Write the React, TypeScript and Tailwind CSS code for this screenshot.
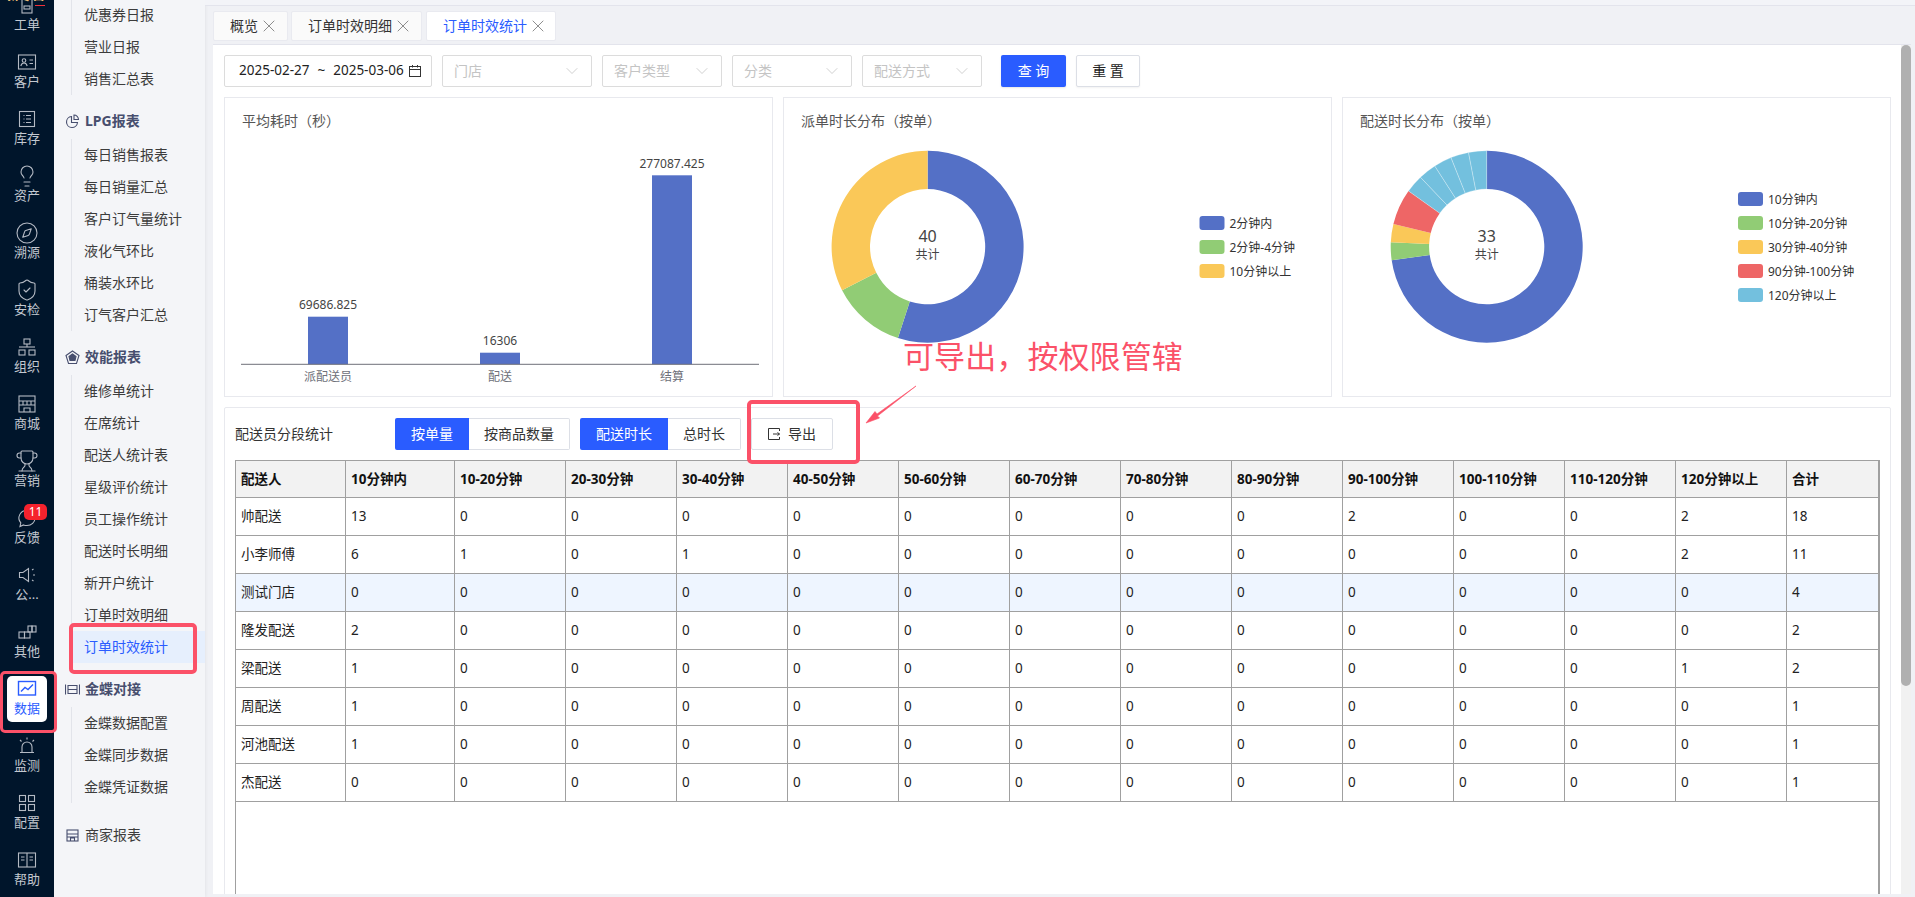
import React from "react";
import { Lightbulb, Compass, ShieldCheck, Trophy, X, ChevronDown } from "lucide-react";

const FONT = { fontFamily: '"Noto Sans","Noto Sans CJK SC",sans-serif' };
const BLUE = "#2a5cff";
const C = { b: "#5470c6", g: "#91cc75", y: "#fac858", r: "#ee6666", c: "#73c0de" };

function Ico({ children, color = "#b4bac4" }: { children: React.ReactNode; color?: string }) {
  return (
    <svg width="24" height="24" viewBox="0 0 24 24" fill="none" stroke={color} strokeWidth="1.1">
      {children}
    </svg>
  );
}

const nav: { label: string; icon: React.ReactNode; active?: boolean; badge?: string }[] = [
  { label: "工单", icon: <Ico><rect x="7" y="6" width="10" height="14" /><rect x="9" y="13" width="6" height="3" /></Ico> },
  { label: "客户", icon: <Ico><rect x="3.5" y="5" width="17" height="14" /><circle cx="9" cy="10.5" r="1.8" /><path d="M5.8 16c.5-2 1.8-3 3.2-3s2.7 1 3.2 3M14.5 10h3.5M14.5 13.5h3.5" /></Ico> },
  { label: "库存", icon: <Ico><rect x="4.5" y="4.5" width="15" height="15" /><path d="M8.5 8.5h1M8.5 12h1M8.5 15.5h1M11 8.5h5M11 12h5M11 15.5h5" /></Ico> },
  { label: "资产", icon: <Lightbulb size={24} strokeWidth={1.1} color="#b4bac4" /> },
  { label: "溯源", icon: <Compass size={24} strokeWidth={1.1} color="#b4bac4" /> },
  { label: "安检", icon: <ShieldCheck size={24} strokeWidth={1.1} color="#b4bac4" /> },
  { label: "组织", icon: <Ico><rect x="9" y="4" width="6" height="5" /><path d="M4 12h16" /><rect x="4" y="15" width="6" height="5" /><rect x="14" y="15" width="6" height="5" /><path d="M12 9v3" /></Ico> },
  { label: "商城", icon: <Ico><rect x="4" y="4" width="16" height="16" /><path d="M4 9h16M4 13h16M9 20v-4h6v4M8 9v4M12 9v4M16 9v4" /></Ico> },
  { label: "营销", icon: <Trophy size={24} strokeWidth={1.1} color="#b4bac4" /> },
  { label: "反馈", icon: <Ico><path d="M12 4.5a8 7.5 0 0 1 0 15c-1.5 0-2.5-.2-3.5-.6L5 20.5l.8-3.6A7.5 7.5 0 0 1 12 4.5z" /></Ico>, badge: "11" },
  { label: "公...", icon: <Ico><path d="M13.5 5.5v13L8 14.5H4.5v-5H8z" /><path d="M17 7l1.5-1M18 12h2M17 17l1.5 1" /></Ico> },
  { label: "其他", icon: <Ico><rect x="4" y="12" width="5.5" height="6" /><rect x="9.5" y="12" width="5.5" height="6" /><rect x="13" y="6" width="4" height="6" /><rect x="17" y="6" width="4" height="6" /></Ico> },
  { label: "数据", active: true, icon: <Ico color={BLUE}><rect x="3.5" y="4.5" width="17" height="13.5" strokeWidth="1.4" /><path d="M6 14.5l4-4 3 2 5-5" strokeWidth="1.4" /></Ico> },
  { label: "监测", icon: <Ico><path d="M7 18v-5a5 5 0 0 1 10 0v5M5 18.5h14M12 3.5v2M5 6l1.5 1.5M19 6l-1.5 1.5" /></Ico> },
  { label: "配置", icon: <Ico><rect x="4.5" y="4.5" width="6" height="6" /><rect x="13.5" y="4.5" width="6" height="6" /><rect x="4.5" y="13.5" width="6" height="6" /><rect x="13.5" y="13.5" width="6" height="6" /></Ico> },
  { label: "帮助", icon: <Ico><rect x="3.5" y="5" width="17" height="14" /><path d="M12 5v14M6 9h3.5M6 12h3.5M14.5 9H18M14.5 12H18" /></Ico> },
];

function Rail() {
  return (
    <div className="w-[54px] shrink-0 bg-[#00152b] flex flex-col items-center relative overflow-hidden">
      <div className="absolute left-[6px] top-[-15px] text-[13px] leading-[18px] font-bold text-[#f0c078] whitespace-nowrap">新零售</div>
      <div className="absolute left-[35px] top-[5px] w-[10px] h-[1px] bg-[#f0303a]" />
      <div className="mt-[-8px] flex flex-col items-center">
        {nav.map((n) => (
          <div
            key={n.label}
            className={
              n.active
                ? "w-[40px] h-[46px] mb-[11px] rounded-[5px] bg-white flex flex-col items-center pt-[1px] relative"
                : "w-[40px] h-[46px] mb-[11px] flex flex-col items-center pt-[1px] relative"
            }
          >
            <div className="h-[23px] flex items-center justify-center">{n.icon}</div>
            <div className={n.active ? "text-[13px] leading-[16px] text-[#2a5cff]" : "text-[13px] leading-[16px] text-[#c3c8d0]"}>{n.label}</div>
            {n.badge && (
              <div className="absolute left-[17px] top-[-1px] w-[23px] h-[16px] rounded-[5px] bg-[#f5222d] text-white text-[12px] leading-[16px] text-center">{n.badge}</div>
            )}
          </div>
        ))}
      </div>
    </div>
  );
}

function GroupIcon({ kind }: { kind: string }) {
  const s = { stroke: "#474e6e", fill: "none", strokeWidth: 1.1 };
  if (kind === "pie")
    return (
      <svg width="15" height="15" viewBox="0 0 15 15">
        <path d="M6.5 2.5a5.5 5.5 0 1 0 6 6H6.5z" {...s} />
        <path d="M9 1v4.5h4.5A4.5 4.5 0 0 0 9 1z" {...s} />
      </svg>
    );
  if (kind === "gem")
    return (
      <svg width="15" height="15" viewBox="0 0 15 15">
        <path d="M7.5 1L14 5.5 11.5 13.5h-8L1 5.5z" {...s} />
        <path d="M7.5 4l3.5 2.5-1 4H5l-1-4z" {...s} fill="#474e6e" />
      </svg>
    );
  if (kind === "link")
    return (
      <svg width="15" height="15" viewBox="0 0 15 15">
        <path d="M.5 2.5v10M14.5 2.5v10M3 3.5h9v8H3zM3 7.5h9" {...s} />
      </svg>
    );
  return (
    <svg width="15" height="15" viewBox="0 0 15 15">
      <rect x="2" y="2" width="11" height="11" {...s} />
      <path d="M2 6h11M2 9h11M5.5 13v-3h4v3" {...s} />
    </svg>
  );
}

function Group({ icon, title, items, active }: { icon: string; title: string; items: string[]; active?: string }) {
  return (
    <div className="mt-[10px]">
      <div className="h-[32px] mb-[2px] flex items-center pl-[11px]">
        <GroupIcon kind={icon} />
        <span className="ml-[5px] mb-[2px] text-[14px] font-bold text-[#474e6e]">{title}</span>
      </div>
      <Items items={items} active={active} />
    </div>
  );
}

function Items({ items, active }: { items: string[]; active?: string }) {
  return (
    <div className="ml-[17px] border-l border-[#e2e4ea]">
      {items.map((t) => (
        <div
          key={t}
          className={
            t === active
              ? "h-[32px] ml-[1px] pl-[11px] pb-[2px] flex items-center text-[14px] text-[#2a5cff] bg-[#e6effd]"
              : "h-[32px] ml-[1px] pl-[11px] pb-[2px] flex items-center text-[14px] text-[#3c3c3c]"
          }
        >
          {t}
        </div>
      ))}
    </div>
  );
}

function SubMenu() {
  return (
    <div className="w-[151px] shrink-0 bg-[#f4f5f8] shadow-[1px_0_3px_rgba(0,0,0,0.05)] overflow-hidden">
      <div className="mt-[-1px]">
        <Items items={["优惠券日报", "营业日报", "销售汇总表"]} />
      </div>
      <Group icon="pie" title="LPG报表" items={["每日销售报表", "每日销量汇总", "客户订气量统计", "液化气环比", "桶装水环比", "订气客户汇总"]} />
      <Group
        icon="gem"
        title="效能报表"
        active="订单时效统计"
        items={["维修单统计", "在席统计", "配送人统计表", "星级评价统计", "员工操作统计", "配送时长明细", "新开户统计", "订单时效明细", "订单时效统计"]}
      />
      <Group icon="link" title="金蝶对接" items={["金蝶数据配置", "金蝶同步数据", "金蝶凭证数据"]} />
      <div className="mt-[16px] h-[32px] flex items-center pl-[11px]">
        <GroupIcon kind="store" />
        <span className="ml-[5px] mb-[2px] text-[14px] text-[#3c3c3c]">商家报表</span>
      </div>
    </div>
  );
}

function Tab({ label, active, width }: { label: string; active?: boolean; width: string }) {
  return (
    <div
      className={
        (active ? "bg-white text-[#2a5cff] " : "bg-[#fafafa] text-[#333333] ") +
        "h-[30px] border border-[#e9eaf0] flex items-center pl-[16px] text-[14px] rounded-[2px] " +
        width
      }
    >
      <span className="mb-[2px]">{label}</span>
      <X size={20} strokeWidth={0.8} color="#555555" className="ml-[1px]" />
    </div>
  );
}

function Sel({ label, width }: { label: string; width: string }) {
  return (
    <div className={"h-[32px] border border-[#dcdcdc] rounded-[2px] flex items-center justify-between pl-[11px] pr-[9px] text-[14px] text-[#c4c4c4] " + width}>
      <span className="mb-[2px]">{label}</span>
      <ChevronDown size={20} strokeWidth={0.8} color="#b8b8b8" />
    </div>
  );
}

function Filters() {
  return (
    <div className="flex items-center h-[32px] mb-[10px]">
      <div className="w-[208px] h-[32px] border border-[#dcdcdc] rounded-[2px] flex items-center pl-[14px] text-[13.5px] text-[#222222] mr-[10px]">
        <span className="whitespace-nowrap mb-[2px]">2025-02-27</span>
        <span className="mx-[8px] mb-[2px]">~</span>
        <span className="whitespace-nowrap mb-[2px]">2025-03-06</span>
        <svg className="ml-[4px]" width="14" height="14" viewBox="0 0 14 14" fill="none" stroke="#333333" strokeWidth="1">
          <rect x="1.5" y="2.5" width="11" height="10" />
          <path d="M1.5 5.5h11M4.5 1v2.5M9.5 1v2.5" />
        </svg>
      </div>
      <Sel label="门店" width="w-[150px] mr-[10px]" />
      <Sel label="客户类型" width="w-[120px] mr-[10px]" />
      <Sel label="分类" width="w-[120px] mr-[10px]" />
      <Sel label="配送方式" width="w-[120px]" />
      <div className="ml-[19px] w-[65px] h-[32px] pb-[2px] rounded-[2px] bg-[#2a5cff] text-white text-[14px] flex items-center justify-center whitespace-pre shadow-[0_1px_2px_rgba(0,0,0,0.1)]">查 询</div>
      <div className="ml-[10px] w-[64px] h-[32px] pb-[2px] rounded-[2px] bg-white border border-[#dcdfe6] text-[#222222] text-[14px] flex items-center justify-center whitespace-pre shadow-[0_1px_2px_rgba(0,0,0,0.05)]">重 置</div>
    </div>
  );
}

function arc(cx: number, cy: number, R: number, r: number, a0: number, a1: number) {
  const p = (rad: number, a: number) => {
    const t = (a * Math.PI) / 180;
    return `${(cx + rad * Math.sin(t)).toFixed(2)} ${(cy - rad * Math.cos(t)).toFixed(2)}`;
  };
  const large = a1 - a0 > 180 ? 1 : 0;
  return `M${p(R, a0)} A${R} ${R} 0 ${large} 1 ${p(R, a1)} L${p(r, a1)} A${r} ${r} 0 ${large} 0 ${p(r, a0)} Z`;
}

function Donut({ cx, total, data, legend, lx, ly }: { cx: number; total: number; data: { v: number; c: string; seam?: boolean }[]; legend: [string, string][]; lx: number; ly: number }) {
  const cy = 114.7;
  let a = 0;
  const sum = data.reduce((s, d) => s + d.v, 0);
  return (
    <svg width="547" height="264" style={FONT}>
      {data.map((d, i) => {
        const a0 = a;
        a += (d.v / sum) * 360;
        return <path key={i} d={arc(cx, cy, 96, 57.6, a0, a)} fill={d.c} stroke={d.seam ? "#ffffff" : "none"} strokeWidth={d.seam ? 0.4 : 0} strokeOpacity={0.7} />;
      })}
      <text x={cx} y={104} textAnchor="middle" dominantBaseline="central" fontSize="16" fill="#444444">{total}</text>
      <text x={cx} y={122} textAnchor="middle" dominantBaseline="central" fontSize="12" fill="#444444">共计</text>
      {legend.map(([t, c], i) => (
        <g key={t}>
          <rect x={lx} y={ly + i * 24} width="25" height="14" rx="3" fill={c} />
          <text x={lx + 30} y={ly + i * 24 + 7} dominantBaseline="central" fontSize="12" fill="#333333">{t}</text>
        </g>
      ))}
    </svg>
  );
}

function Bars() {
  const bars = [
    { x: 83, top: 184.7, v: "69686.825", vy: 172, l: "派配送员" },
    { x: 255, top: 220.7, v: "16306", vy: 208.6, l: "配送" },
    { x: 427, top: 43.3, v: "277087.425", vy: 31, l: "结算" },
  ];
  return (
    <svg width="547" height="264" style={FONT}>
      {bars.map((b) => (
        <g key={b.l}>
          <rect x={b.x} y={b.top} width="40" height={232.3 - b.top} fill={C.b} />
          <text x={b.x + 20} y={b.vy} textAnchor="middle" dominantBaseline="central" fontSize="12" fill="#444444">{b.v}</text>
          <text x={b.x + 20} y={244.7} textAnchor="middle" dominantBaseline="central" fontSize="12" fill="#6e7079">{b.l}</text>
        </g>
      ))}
      <line x1="16" x2="534" y1="232.3" y2="232.3" stroke="#6e7079" strokeWidth="1" />
    </svg>
  );
}

function Card({ title, children }: { title: string; children: React.ReactNode }) {
  return (
    <div className="w-[549px] h-[300px] border border-[#e8e9ee] bg-white">
      <div className="h-[34px] pt-[13px] pl-[17px] text-[14px] leading-[20px] text-[#555555]">{title}</div>
      {children}
    </div>
  );
}

const colW = ["w-[110px]", "w-[109px]", "w-[111px]", "w-[111px]", "w-[111px]", "w-[111px]", "w-[111px]", "w-[111px]", "w-[111px]", "w-[111px]", "w-[111px]", "w-[111px]", "w-[111px]", "w-[111px]", "w-[92px]"];
const heads = ["配送人", "10分钟内", "10-20分钟", "20-30分钟", "30-40分钟", "40-50分钟", "50-60分钟", "60-70分钟", "70-80分钟", "80-90分钟", "90-100分钟", "100-110分钟", "110-120分钟", "120分钟以上", "合计"];
const rows: (string | number)[][] = [
  ["帅配送", 13, 0, 0, 0, 0, 0, 0, 0, 0, 2, 0, 0, 2, 18],
  ["小李师傅", 6, 1, 0, 1, 0, 0, 0, 0, 0, 0, 0, 0, 2, 11],
  ["测试门店", 0, 0, 0, 0, 0, 0, 0, 0, 0, 0, 0, 0, 0, 4],
  ["隆发配送", 2, 0, 0, 0, 0, 0, 0, 0, 0, 0, 0, 0, 0, 2],
  ["梁配送", 1, 0, 0, 0, 0, 0, 0, 0, 0, 0, 0, 0, 1, 2],
  ["周配送", 1, 0, 0, 0, 0, 0, 0, 0, 0, 0, 0, 0, 0, 1],
  ["河池配送", 1, 0, 0, 0, 0, 0, 0, 0, 0, 0, 0, 0, 0, 1],
  ["杰配送", 0, 0, 0, 0, 0, 0, 0, 0, 0, 0, 0, 0, 0, 1],
];

function Table() {
  return (
    <div className="h-[440px] border-l border-t border-r-2 border-[#a0a0a0] overflow-hidden">
      <table className="table-fixed border-separate border-spacing-0 w-[1641px]">
        <colgroup>
          {colW.map((w, i) => (
            <col key={i} className={w} />
          ))}
        </colgroup>
        <thead>
          <tr>
            {heads.map((h) => (
              <th key={h} className="h-[37px] bg-[#f2f2f2] border-r border-b border-[#a0a0a0] pl-[5px] text-left text-[13.5px] font-bold text-[#111111] whitespace-nowrap">{h}</th>
            ))}
          </tr>
        </thead>
        <tbody>
          {rows.map((r, i) => (
            <tr key={i} className={i === 2 ? "bg-[#eef5ff]" : ""}>
              {r.map((c, j) => (
                <td key={j} className="h-[38px] border-r border-b border-[#a0a0a0] pl-[5px] text-left text-[13.5px] text-[#222222]">{c}</td>
              ))}
            </tr>
          ))}
        </tbody>
      </table>
    </div>
  );
}

function TableCard() {
  return (
    <div className="mt-[10px] h-[490px] border border-[#e8e9ee] rounded-[2px] px-[10px] pt-[10px] bg-white">
      <div className="h-[32px] mb-[10px] flex items-center">
        <div className="w-[160px] pb-[2px] text-[14px] text-[#333333]">配送员分段统计</div>
        <div className="w-[74px] h-[32px] pb-[2px] bg-[#2a5cff] text-white text-[14px] flex items-center justify-center rounded-l-[2px]">按单量</div>
        <div className="w-[101px] h-[32px] pb-[2px] border border-l-0 border-[#dcdfe6] text-[#333333] text-[14px] flex items-center justify-center rounded-r-[2px]">按商品数量</div>
        <div className="ml-[10px] w-[88px] h-[32px] pb-[2px] bg-[#2a5cff] text-white text-[14px] flex items-center justify-center rounded-l-[2px]">配送时长</div>
        <div className="w-[73px] h-[32px] pb-[2px] border border-l-0 border-[#dcdfe6] text-[#333333] text-[14px] flex items-center justify-center rounded-r-[2px]">总时长</div>
        <div className="ml-[10px] w-[82px] h-[32px] border border-[#dcdfe6] text-[#333333] text-[14px] flex items-center pl-[15px] rounded-[2px]">
          <svg width="14" height="14" viewBox="0 0 14 14" fill="none" stroke="#333333" strokeWidth="1">
            <path d="M12.5 4V1.5h-11v11h11V10M6 7h6.5M10.5 5.5L12.5 7l-2 1.5" />
          </svg>
          <span className="ml-[7px] mb-[2px]">导出</span>
        </div>
      </div>
      <Table />
    </div>
  );
}

function Annotations() {
  return (
    <>
      <div className="absolute left-[0px] top-[671px] w-[57px] h-[62px] border-[3px] border-[#fb5168] rounded-[5px]" />
      <div className="absolute left-[69px] top-[623px] w-[128px] h-[51px] border-[4px] border-[#fb5168] rounded-[5px]" />
      <div className="absolute left-[747px] top-[400px] w-[113px] h-[64px] border-[4px] border-[#fb5168] rounded-[5px]" />
      <div className="absolute left-[903px] top-[334px] text-[31px] leading-[44px] text-[#fb5168] whitespace-nowrap tracking-[0.1px]">可导出，按权限管辖</div>
      <svg className="absolute left-[860px] top-[380px]" width="62" height="50" viewBox="0 0 62 50" fill="#fb5168">
        <path d="M56 6 L17 34 L15 31.5 L6 43 L19.5 38 L17.5 36 Z" stroke="#fb5168" strokeWidth="0.6" />
      </svg>
    </>
  );
}

export default function App() {
  return (
    <div className="relative w-[1915px] h-[897px] flex overflow-hidden bg-[#f0f1f5]" style={FONT}>
      <Rail />
      <SubMenu />
      <div className="flex-1 min-w-0 flex flex-col pl-[8px] pr-[4px]">
        <div className="h-[6px] -mx-[8px] bg-[#f3f4f8] border-b border-[#e3e4ec] shrink-0" />
        <div className="mt-[5px] h-[33px] shrink-0 flex items-start">
          <Tab label="概览" width="w-[75px] mr-[3px]" />
          <Tab label="订单时效明细" width="w-[131px] mr-[4px]" />
          <Tab label="订单时效统计" active width="w-[130px]" />
        </div>
        <div className="h-[850px] shrink-0 flex bg-white border-t border-[#e3e4ec]">
          <div className="w-[1688px] shrink-0 pl-[11px] pt-[10px] overflow-hidden">
            <Filters />
            <div className="flex gap-[10px]">
              <Card title="平均耗时（秒）">
                <Bars />
              </Card>
              <Card title="派单时长分布（按单）">
                <Donut
                  cx={143.6}
                  total={40}
                  lx={415.5}
                  ly={84}
                  data={[{ v: 22, c: C.b }, { v: 5, c: C.g }, { v: 13, c: C.y }]}
                  legend={[["2分钟内", C.b], ["2分钟-4分钟", C.g], ["10分钟以上", C.y]]}
                />
              </Card>
              <Card title="配送时长分布（按单）">
                <Donut
                  cx={143.7}
                  total={33}
                  lx={395}
                  ly={60}
                  data={[
                    { v: 24, c: C.b },
                    { v: 1, c: C.g },
                    { v: 1, c: C.y },
                    { v: 2, c: C.r },
                    { v: 1, c: C.c, seam: true },
                    { v: 1, c: C.c, seam: true },
                    { v: 1, c: C.c, seam: true },
                    { v: 1, c: C.c, seam: true },
                    { v: 1, c: C.c, seam: true },
                  ]}
                  legend={[["10分钟内", C.b], ["10分钟-20分钟", C.g], ["30分钟-40分钟", C.y], ["90分钟-100分钟", C.r], ["120分钟以上", C.c]]}
                />
              </Card>
            </div>
            <div className="w-[1667px]">
              <TableCard />
            </div>
          </div>
          <div className="w-[10px] shrink-0 bg-[#f1f1f1]">
            <div className="h-[641px] bg-[#b0b0b0] rounded-[5px]" />
          </div>
        </div>
      </div>
      <Annotations />
    </div>
  );
}
